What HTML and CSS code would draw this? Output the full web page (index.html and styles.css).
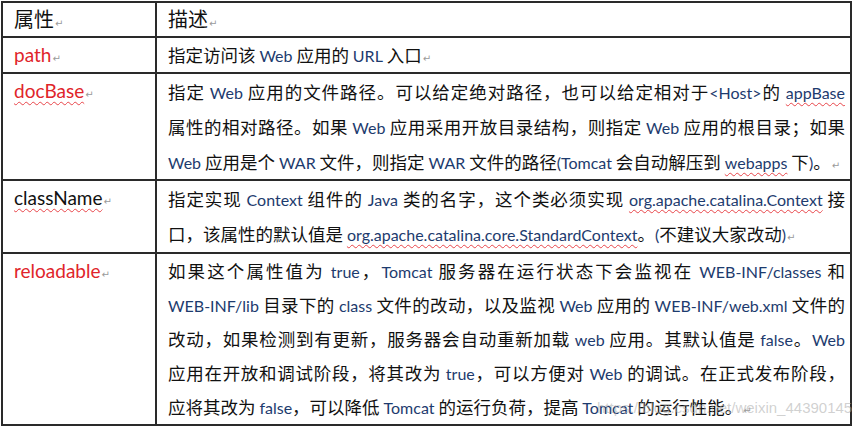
FILE: index.html
```html
<!DOCTYPE html>
<html lang="zh-CN">
<head>
    <meta charset="UTF-8">
    <meta name="viewport" content="width=device-width, initial-scale=1.0">
    <title>Context 元素属性</title>
    <link rel="stylesheet" href="styles.css">
</head>
<body>

    <table class="attr-table">
        <colgroup>
            <col class="col-name">
            <col class="col-desc">
        </colgroup>
        <tr class="row-head">
            <th>属性<span class="mark">↵</span></th>
            <th>描述<span class="mark">↵</span></th>
        </tr>
        <tr class="row-path">
            <td class="name">path<span class="mark">↵</span></td>
            <td class="desc">
                <span class="line">指定访问该 <span class="en">Web</span> 应用的 <span class="en">URL</span> 入口<span class="mark">↵</span></span>
            </td>
        </tr>
        <tr class="row-docbase">
            <td class="name"><span class="squiggle">docBase</span><span class="mark">↵</span></td>
            <td class="desc">
                <span class="line fill">指定 <span class="en">Web</span> 应用的文件路径。可以给定绝对路径，也可以给定相对于<span class="en">&lt;Host&gt;</span>的 <span class="en squiggle">appBase</span></span>
                <span class="line fill">属性的相对路径。如果 <span class="en">Web</span> 应用采用开放目录结构，则指定 <span class="en">Web</span> 应用的根目录；如果</span>
                <span class="line"><span class="en">Web</span> 应用是个 <span class="en">WAR</span> 文件，则指定 <span class="en">WAR</span> 文件的路径<span class="en">(Tomcat</span> 会自动解压到 <span class="en squiggle">webapps</span> 下<span class="en">)</span>。<span class="mark">↵</span></span>
            </td>
        </tr>
        <tr class="row-classname">
            <td class="name"><span class="squiggle">className</span><span class="mark">↵</span></td>
            <td class="desc">
                <span class="line fill">指定实现 <span class="en">Context</span> 组件的 <span class="en">Java</span> 类的名字，这个类必须实现 <span class="en squiggle">org.apache.catalina.Context</span> 接</span>
                <span class="line">口，该属性的默认值是 <span class="en squiggle">org.apache.catalina.core.StandardContext</span>。<span class="en">(</span>不建议大家改动<span class="en">)</span><span class="mark">↵</span></span>
            </td>
        </tr>
        <tr class="row-reload">
            <td class="name">reloadable<span class="mark">↵</span></td>
            <td class="desc">
                <span class="line fill">如果这个属性值为 <span class="en">true</span>，<span class="en">Tomcat</span> 服务器在运行状态下会监视在 <span class="en">WEB-INF/classes</span> 和</span>
                <span class="line fill"><span class="en">WEB-INF/lib</span> 目录下的 <span class="en">class</span> 文件的改动，以及监视 <span class="en">Web</span> 应用的 <span class="en">WEB-INF/web.xml</span> 文件的</span>
                <span class="line fill">改动，如果检测到有更新，服务器会自动重新加载 <span class="en">web</span> 应用。其默认值是 <span class="en">false</span>。<span class="en">Web</span></span>
                <span class="line fill">应用在开放和调试阶段，将其改为 <span class="en">true</span>，可以方便对 <span class="en">Web</span> 的调试。在正式发布阶段，</span>
                <span class="line">应将其改为 <span class="en">false</span>，可以降低 <span class="en">Tomcat</span> 的运行负荷，提高 <span class="en">Tomcat</span> 的运行性能。<span class="mark">↵</span></span>
            </td>
        </tr>
    </table>

    <!-- 图片水印 -->
    <div class="watermark">https://blog.csdn.net/weixin_44390145</div>

</body>
</html>
```

FILE: styles.css
```css
body {
    margin: 0;
    background-color: #fff;
    font-family: "Noto Sans CJK SC", sans-serif;
    color: #111;
    position: relative;
    width: 855px;
    height: 427px;
    overflow: hidden;
}
.attr-table {
    border-collapse: collapse;
    margin: 1px 0 0 1px;
    width: 851px;
    table-layout: fixed;
    border: 2px solid #2a2a2a;
}
.col-name {
    width: 154px;
}
.attr-table th,
.attr-table td {
    border: 2px solid #2a2a2a;
    padding: 0 5px 0 11px;
    vertical-align: top;
    text-align: left;
    font-weight: normal;
}
th {
    font-size: 20px;
    line-height: 32px;
}
.row-head { height: 35px; }
.row-path { height: 36px; }
.row-docbase { height: 106px; }
.row-classname { height: 73px; }
.row-reload { height: 171px; }

.name {
    font-family: "Lato", "Noto Sans CJK SC", sans-serif;
    font-size: 19px;
    line-height: 33px;
    color: #e0242a;
}
.row-classname .name {
    color: #111;
}
.desc {
    font-size: 17.5px;
    line-height: 35px;
}
.row-path .desc {
    line-height: 34px;
}
.row-reload .desc {
    line-height: 34px;
}
.line {
    display: block;
    white-space: nowrap;
}
.line.fill {
    white-space: normal;
    text-align: justify;
    text-align-last: justify;
}
/* 子元素行高设小，避免把行撑高 */
.en {
    font-family: "Lato", sans-serif;
    font-size: 16px;
    line-height: 1;
    color: #1d3b6e;
}
.squiggle {
    text-decoration: underline wavy #e8454a;
    text-decoration-thickness: 1px;
    text-underline-offset: 3px;
}
.mark {
    font-family: "DejaVu Sans", sans-serif;
    font-size: 10px;
    line-height: 1;
    color: #9a9a9a;
    margin-left: 1px;
}
/* 水印压在表格上面 */
.watermark {
    position: absolute;
    left: 597px;
    top: 399px;
    font-family: "Liberation Sans", sans-serif;
    font-size: 15px;
    color: rgba(170, 170, 170, 0.55);
    pointer-events: none;
}
```
